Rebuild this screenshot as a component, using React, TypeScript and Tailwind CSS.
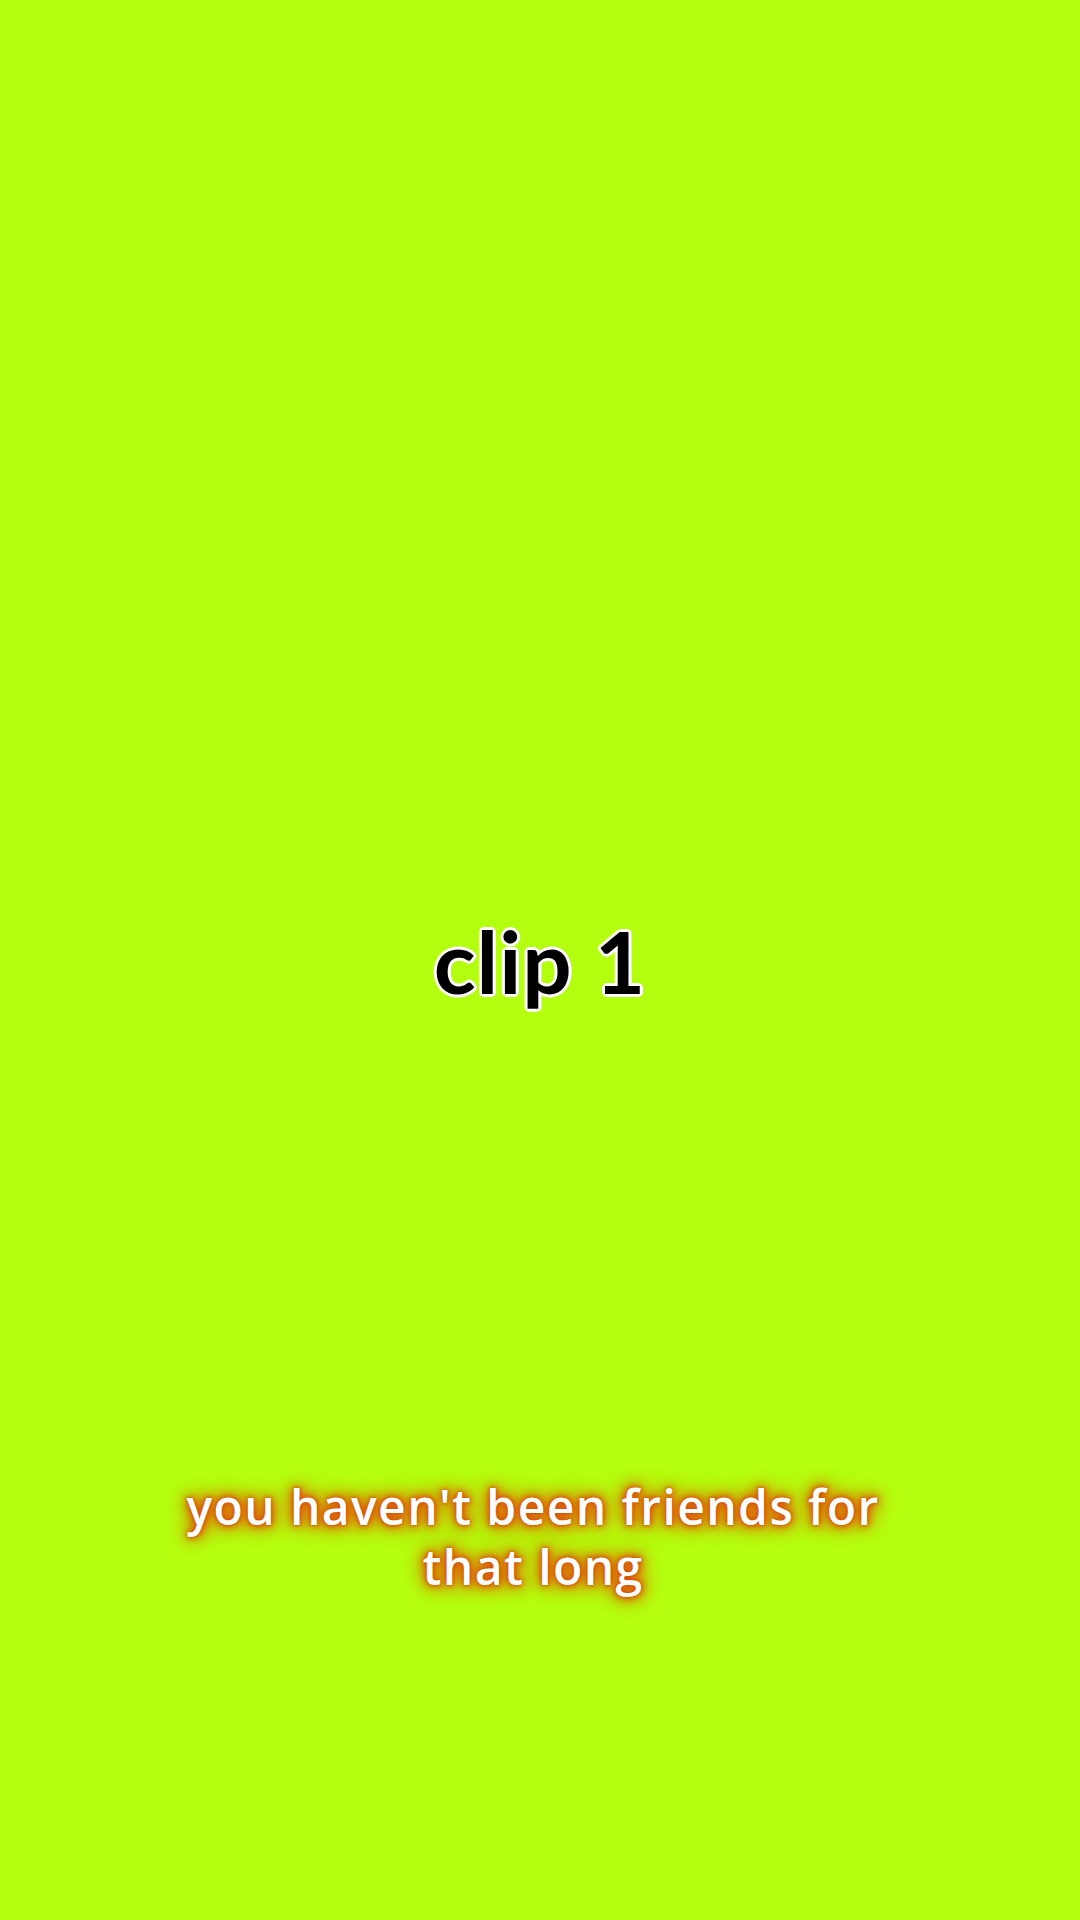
import React from "react";

export default function App() {
  return (
    <div className="w-[1080px] h-[1920px] bg-[#b4ff0f] flex flex-col items-center pt-[911px] font-['Lato','Liberation_Sans',sans-serif]">
      {/* Clip label */}
      <div className="text-[87px] leading-[100px] font-bold text-black tracking-[1px] [text-shadow:0_0_2px_#fff,2px_2px_0_#fff,-2px_-2px_0_#fff,2px_-2px_0_#fff,-2px_2px_0_#fff,3px_0_0_#fff,-3px_0_0_#fff,0_3px_0_#fff,0_-3px_0_#fff]">
        clip 1
      </div>

      {/* Caption */}
      <p className="mt-[466px] mr-[14px] text-center text-[48px] leading-[60px] font-semibold tracking-[1.4px] text-white font-['Open_Sans','Liberation_Sans',sans-serif] [text-shadow:0_0_3px_#d5440a,0_0_7px_#d9480a,0_0_12px_#e0520a,0_0_18px_#e85a08,0_0_26px_#ee6a06]">
        you haven't been friends for
        <br />
        that long
      </p>
    </div>
  );
}
